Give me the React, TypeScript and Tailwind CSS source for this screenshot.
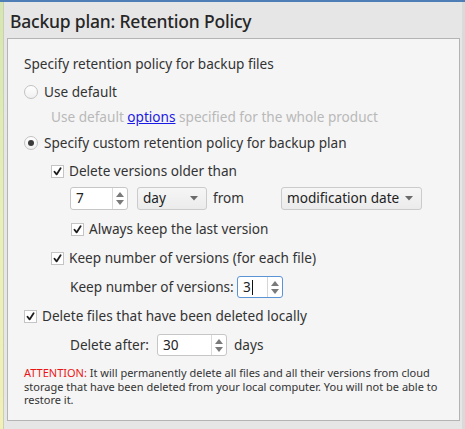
import React from "react";

const font = { fontFamily: '"Noto Sans", "Open Sans", sans-serif' };

function Radio({ checked }: { checked?: boolean }) {
  return (
    <span className="w-[14px] h-[14px] rounded-full border border-[#c2c2c2] bg-gradient-to-b from-[#ffffff] to-[#f0f0f0] flex items-center justify-center shrink-0">
      {checked && <span className="w-[6px] h-[6px] rounded-full bg-[#3a3a3a]" />}
    </span>
  );
}

function Check() {
  return (
    <span className="w-[13px] h-[13px] border border-[#c4c4c4] bg-white flex items-center justify-center shrink-0">
      <svg width="9" height="9" viewBox="0 0 9 9">
        <path d="M1.5 4.8 L3.6 7.4 L7.6 1.2" fill="none" stroke="#1e1e1e" strokeWidth="1.8" strokeLinecap="round" strokeLinejoin="round" />
      </svg>
    </span>
  );
}

function SpinArrows() {
  return (
    <span className="flex flex-col items-center justify-center gap-[3px] w-[14px] h-full">
      <svg width="8" height="5" viewBox="0 0 8 5"><path d="M0 5 L4 0 L8 5 Z" fill="#7a7a7a" /></svg>
      <svg width="8" height="5" viewBox="0 0 8 5"><path d="M0 0 L4 5 L8 0 Z" fill="#7a7a7a" /></svg>
    </span>
  );
}

function Spin({ value, w, focused, cursor }: { value: string; w: string; focused?: boolean; cursor?: boolean }) {
  return (
    <div
      className={
        "flex items-stretch h-full bg-white rounded-[3px] border " +
        (focused ? "border-[#5b94d6]" : "border-[#c6c6c6]") +
        " " + w
      }
    >
      <div className="flex-1 flex items-center pl-[5px] text-[#222]">
        {value}
        {cursor && <span className="inline-block w-[1px] h-[15px] bg-[#111] ml-[1px]" />}
      </div>
      <div className={"border-l flex items-center " + (focused ? "border-[#d6d6d6]" : "border-[#dadada]")}>
        <SpinArrows />
      </div>
    </div>
  );
}

function Combo({ label, w }: { label: string; w: string }) {
  return (
    <div className={"flex items-center justify-between h-full rounded-[3px] border border-[#cbcbcb] bg-gradient-to-b from-[#f6f6f6] to-[#ebebeb] pl-[5px] pr-[8px] text-[#222] " + w}>
      <span>{label}</span>
      <svg width="8" height="5" viewBox="0 0 8 5"><path d="M0 0 L4 4.5 L8 0 Z" fill="#6a6a6a" /></svg>
    </div>
  );
}

export default function App() {
  return (
    <div className="w-[465px] h-[429px] bg-[#e6e6e6] flex flex-col overflow-hidden" style={font}>
      <div className="h-[2px] bg-[#4f7db5] shrink-0" />
      <div className="flex flex-1">
        <div className="w-[4px] bg-gradient-to-b from-[#d6e6b2] via-[#e8efb8] to-[#f3efb8] border-r border-[#c9d2b0] shrink-0" />
        <div className="flex-1 flex flex-col">
          <div className="h-[36px] flex items-center pl-[6px] text-[17.5px] font-medium text-[#262626] tracking-[-0.2px] pt-[2px]">
            Backup plan: Retention Policy
          </div>
          <div className="ml-[3px] w-[453px] h-[383px] border border-[#b4b4b4] bg-[#f5f5f5] text-[13.6px] text-[#333] pl-[16px] pt-[15px]">
            <div className="h-[20px] flex items-center">Specify retention policy for backup files</div>
            <div className="h-[20px] mt-[8px] flex items-center gap-[6px]">
              <Radio />
              <span>Use default</span>
            </div>
            <div className="h-[20px] mt-[5px] flex items-center pl-[27px] text-[#b9b9b9]">
              <span>
                Use default <span className="text-[#1a1ae6] underline">options</span> specified for the whole product
              </span>
            </div>
            <div className="h-[20px] mt-[6px] flex items-center gap-[6px]">
              <Radio checked />
              <span>Specify custom retention policy for backup plan</span>
            </div>
            <div className="h-[20px] mt-[8px] flex items-center gap-[5px] pl-[27px]">
              <Check />
              <span>Delete versions older than</span>
            </div>
            <div className="h-[23px] mt-[6px] flex items-center pl-[46px]">
              <Spin value="7" w="w-[58px]" />
              <div className="ml-[9px] h-full"><Combo label="day" w="w-[70px]" /></div>
              <span className="ml-[6px] w-[68px]">from</span>
              <div className="h-full"><Combo label="modification date" w="w-[141px]" /></div>
            </div>
            <div className="h-[20px] mt-[9px] flex items-center gap-[5px] pl-[47px]">
              <Check />
              <span>Always keep the last version</span>
            </div>
            <div className="h-[20px] mt-[9px] flex items-center gap-[5px] pl-[27px]">
              <Check />
              <span>Keep number of versions (for each file)</span>
            </div>
            <div className="h-[22px] mt-[8px] flex items-center pl-[46px]">
              <span className="w-[167px]">Keep number of versions:</span>
              <Spin value="3" w="w-[46px]" focused cursor />
            </div>
            <div className="h-[20px] mt-[8px] flex items-center gap-[5px]">
              <Check />
              <span>Delete files that have been deleted locally</span>
            </div>
            <div className="h-[22px] mt-[8px] flex items-center pl-[46px]">
              <span className="w-[87px]">Delete after:</span>
              <Spin value="30" w="w-[70px]" />
              <span className="ml-[7px]">days</span>
            </div>
            <div className="mt-[10px] text-[11px] leading-[13.5px] text-[#333]">
              <span className="text-[#ec1515]">ATTENTION:</span> It will permanently delete all files and all their versions from cloud
              <br />
              storage that have been deleted from your local computer. You will not be able to
              <br />
              restore it.
            </div>
          </div>
        </div>
        <div className="w-[3px] bg-[#dadada] shrink-0" />
      </div>
    </div>
  );
}
